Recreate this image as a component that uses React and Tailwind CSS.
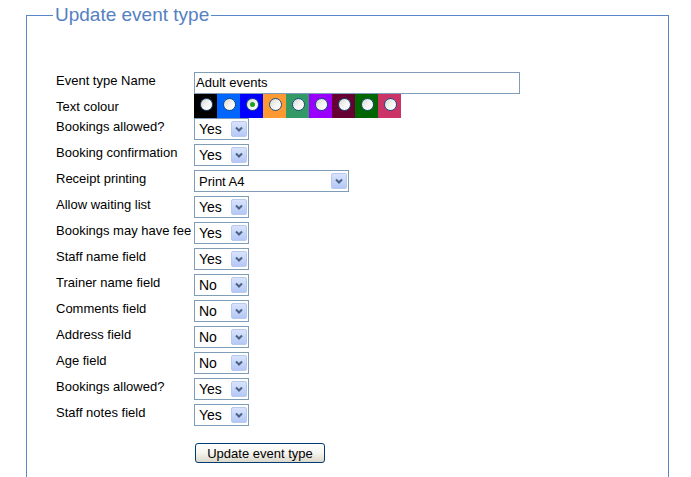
import { useState } from 'react';

const COLOURS = ['#000000', '#0066ff', '#0000ff', '#ff9933', '#339966', '#9900ff', '#660033', '#006600', '#cc3366'];

const FIELDS = [
  { label: 'Bookings allowed?', value: 'Yes' },
  { label: 'Booking confirmation', value: 'Yes' },
  { label: 'Receipt printing', value: 'Print A4', wide: true },
  { label: 'Allow waiting list', value: 'Yes' },
  { label: 'Bookings may have fee', value: 'Yes' },
  { label: 'Staff name field', value: 'Yes' },
  { label: 'Trainer name field', value: 'No' },
  { label: 'Comments field', value: 'No' },
  { label: 'Address field', value: 'No' },
  { label: 'Age field', value: 'No' },
  { label: 'Bookings allowed?', value: 'Yes' },
  { label: 'Staff notes field', value: 'Yes' },
];

function FakeSelect({ value, wide }) {
  return (
    <div className={`h-[22px] ${wide ? 'w-[155px] text-[13px]' : 'w-[55px] text-[14px]'} border border-[#7f9db9] bg-white flex items-center justify-between pl-[4px] pr-[1px]`}>
      <span className="leading-none text-black">{value}</span>
      <span className="w-[16px] h-[16px] rounded-[2px] border border-[#b8c9f0] bg-gradient-to-b from-[#d9e4fd] to-[#b4c8f6] flex items-center justify-center">
        <svg width="8" height="6" viewBox="0 0 8 6">
          <path d="M1 1.5 L4 4.5 L7 1.5" fill="none" stroke="#4d6185" strokeWidth="2" />
        </svg>
      </span>
    </div>
  );
}

function Radio({ checked }) {
  return (
    <span className="block w-[13px] h-[13px] rounded-full border border-[#1c5180] bg-gradient-to-br from-[#d4d4cf] via-[#f4f4f2] to-white flex items-center justify-center">
      {checked && <span className="block w-[5px] h-[5px] rounded-full bg-[#21a121]" />}
    </span>
  );
}

export default function App() {
  const [colour] = useState(2);

  return (
    <div className="min-h-screen bg-white pt-[4px] pl-[26px] font-['Liberation_Sans',Arial,sans-serif] text-black">
      <fieldset className="w-[643px] border border-[#5a86c8] pl-[26px] pt-[46px] pb-[40px]">
        <legend className="px-[2px] text-[19px] leading-[22px] text-[#5580c2]">Update event type</legend>

        <div className="flex flex-col">
          <div className="flex items-start h-[22px]">
            <div className="w-[141px] pl-[3px] text-[13px] leading-[17px]">Event type Name</div>
            <div className="w-[326px] h-[22px] border border-[#7f9db9] flex items-center pl-[1px] text-[13px]">Adult events</div>
          </div>

          <div className="flex items-start h-[24px]">
            <div className="w-[141px] pl-[3px] text-[13px] leading-[25px]">Text colour</div>
            <div className="flex">
              {COLOURS.map((c, i) => (
                <div key={c} className="w-[23px] h-[24px] pl-[6px] pt-[4px]" style={{ backgroundColor: c }}>
                  <Radio checked={i === colour} />
                </div>
              ))}
            </div>
          </div>

          <div className="flex flex-col gap-[4px]">
            {FIELDS.map((f, i) => (
              <div key={i} className="flex items-start h-[22px]">
                <div className="w-[141px] pl-[3px] text-[13px] leading-[17px] whitespace-nowrap">{f.label}</div>
                <FakeSelect value={f.value} wide={f.wide} />
              </div>
            ))}
          </div>

          <div className="flex mt-[17px]">
            <div className="w-[142px]" />
            <button className="w-[130px] h-[20px] rounded-[3px] border border-[#003c74] bg-gradient-to-b from-white via-[#f5f4ef] to-[#dcd8cb] text-[13px] leading-none text-black">
              Update event type
            </button>
          </div>
        </div>
      </fieldset>
    </div>
  );
}
